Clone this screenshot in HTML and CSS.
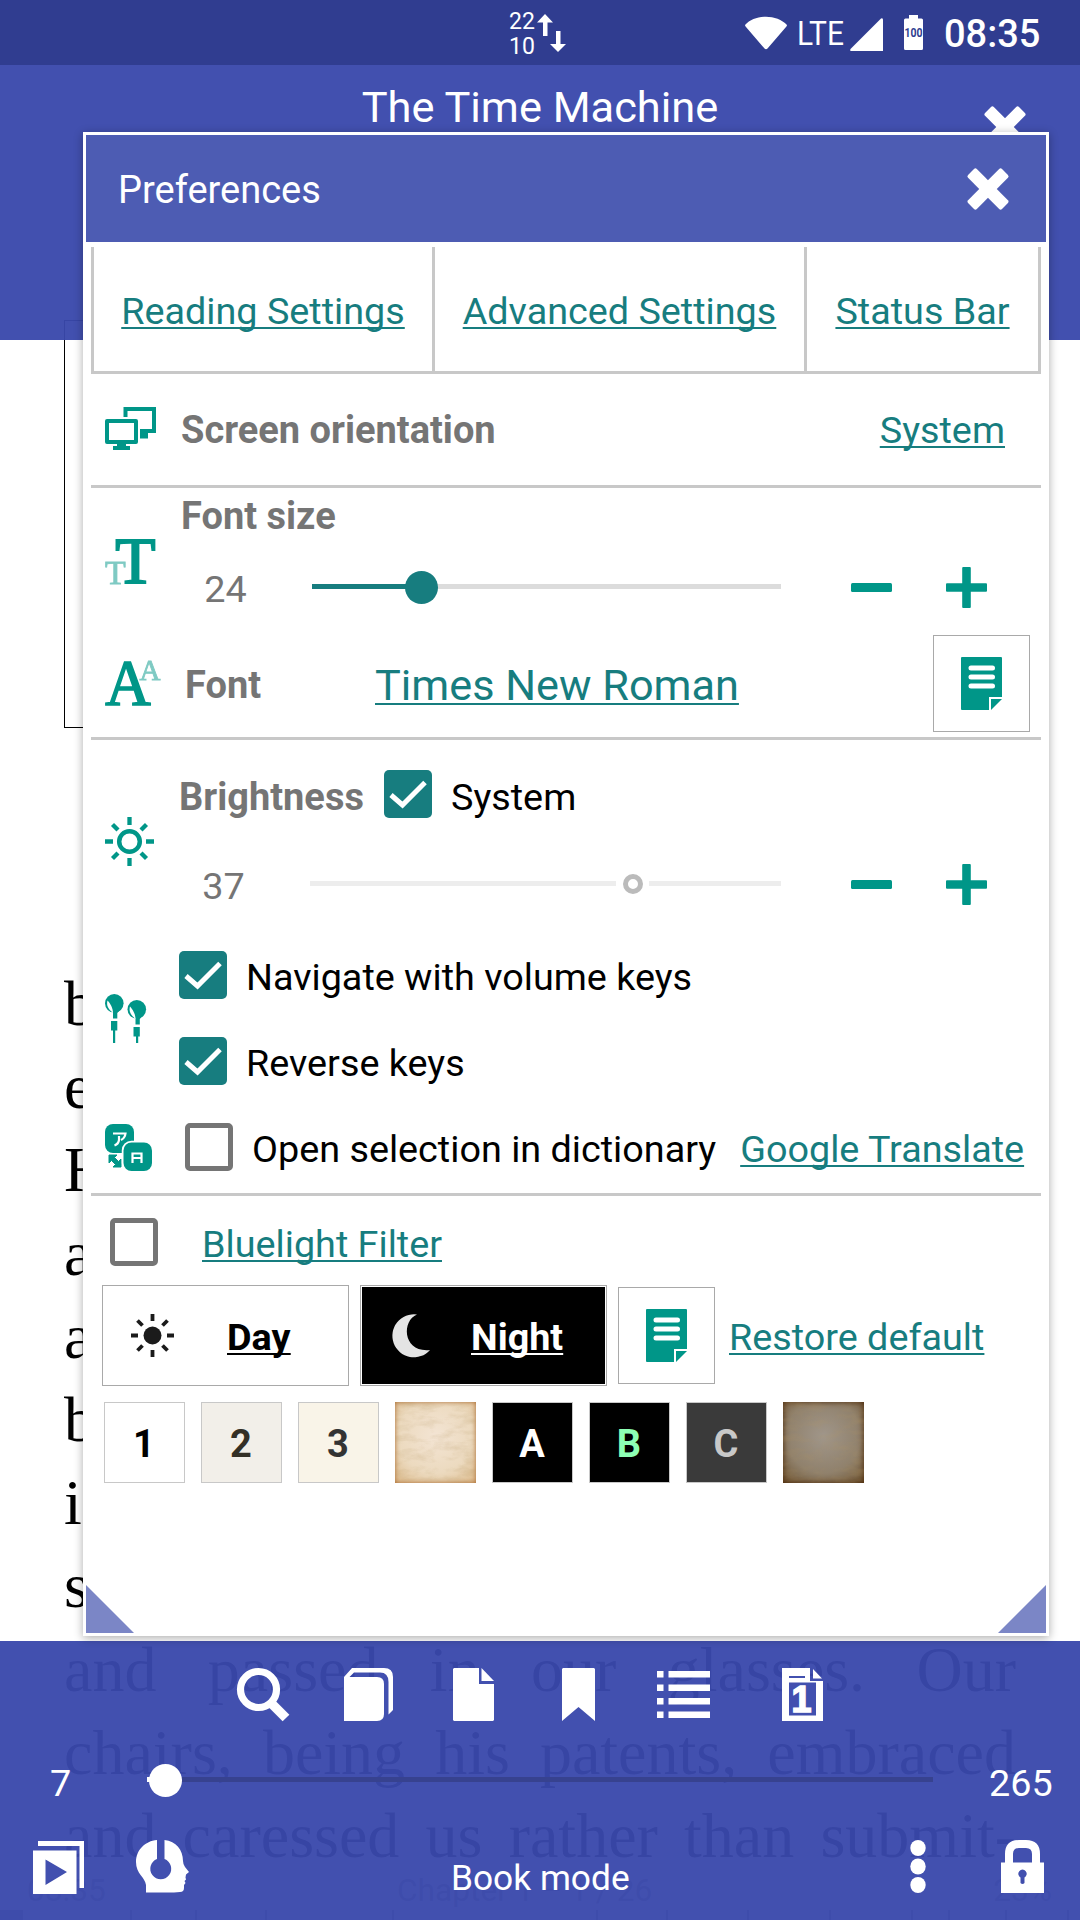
FILE: index.html
```html
<!DOCTYPE html>
<html lang="en">
<head>
<meta charset="utf-8">
<title>The Time Machine</title>
<link rel="stylesheet" href="styles.css">
</head>
<body>
<svg class="defs" width="0" height="0" aria-hidden="true">
  <symbol id="close" viewBox="-22 -22 44 44"><rect x="-24" y="-6.200" width="48" height="12.400" rx="2" transform="rotate(45)" fill="#fff"/><rect x="-24" y="-6.200" width="48" height="12.400" rx="2" transform="rotate(-45)" fill="#fff"/></symbol>
  <symbol id="minus" viewBox="0 0 41 41"><rect y="16" width="41" height="9" rx="1.5"/></symbol>
  <symbol id="plus" viewBox="0 0 41 41"><rect y="16.2" width="41" height="8.6" rx="1"/><rect x="16.2" width="8.6" height="41" rx="1"/></symbol>
  <symbol id="note" viewBox="0 0 41 53"><path d="M1 0H40a1 1 0 0 1 1 1V40H28V53H1a1 1 0 0 1-1-1V1a1 1 0 0 1 1-1Z"/><path d="M30 42H41L30 53Z"/><path d="M10 11H31.500M10 20H31.500M10 29H31.500" stroke="#fff" stroke-width="5" stroke-linecap="round"/></symbol>
  <symbol id="check" viewBox="0 0 48 48"><path d="M7 25 18.500 35 41 12.500" fill="none" stroke="#fff" stroke-width="5"/></symbol>
  <filter id="grain" x="0" y="0" width="100%" height="100%"><feTurbulence type="fractalNoise" baseFrequency=".05 .12" numOctaves="5" seed="8"/><feColorMatrix values="0 0 0 0 .45  0 0 0 0 .3  0 0 0 0 .12  1.400 0 0 0 -.6"/></filter>
</svg>
<div class="screen">
  <main class="page">
    <div class="picture-frame"></div>
    <div class="book-text">
      <p>been</p><p>except</p><p>His</p><p>and</p><p>and</p><p>but</p><p>in</p><p>so</p>
      <p>and passed in our glasses. Our</p>
      <p>chairs, being his patents, embraced</p>
      <p>and caressed us rather than submit-</p>
    </div>
    <footer class="page-footer"><span>08:35</span><span class="chapter">Chapter 1 – 1 / 26</span><span>23%</span></footer>
    <svg class="ticks" viewBox="0 0 1080 10"><path d="M0 0H23V10H0Z"/><path d="M130 0h2v10h-2zM195 0h2v10h-2zM265 0h2v10h-2zM392 0h2v10h-2zM596 0h2v10h-2zM666 0h2v10h-2zM747 0h2v10h-2zM829 0h2v10h-2zM911 0h2v10h-2zM948 0h2v10h-2zM1005 0h2v10h-2zM1067 0h2v10h-2z"/></svg>
  </main>

  <div class="chrome">
    <header class="top-bar">
      <div class="status-bar">
        <div class="net-speed"><span>22</span><span>10</span></div>
        <svg class="net-arrows" viewBox="0 0 28 40"><path d="M8 1 16 9.500H10.500V23H6V9.500H0Z M19 18h4.500v13H29L21 39 13 31h6Z" fill="#fff"/></svg>
        <svg class="wifi" viewBox="0 0 42 34"><path d="M0 9C10-2 32-2 42 9Q42 10 41 11L22.500 32.500Q21 34 19.500 32.500L1 11Q0 10 0 9Z" fill="#fff"/></svg>
        <svg class="lte" viewBox="0 0 44 26"><text x="-3" y="25" font-size="34" textLength="47" lengthAdjust="spacingAndGlyphs" fill="#fff">LTE</text></svg>
        <svg class="signal" viewBox="0 0 33 33"><path d="M31 .5Q33-.5 33 2V33H1.500Q-.5 33 .5 31Z" fill="#fff"/></svg>
        <svg class="battery" viewBox="0 0 19 35"><path d="M5 0H14V3.500H17.500Q19 3.500 19 5V33.500Q19 35 17.500 35H1.500Q0 35 0 33.500V5Q0 3.500 1.500 3.500H5Z" fill="#fff"/><text x="9.500" y="22" text-anchor="middle" font-size="12.500" font-weight="700" textLength="18" lengthAdjust="spacingAndGlyphs" fill="#303d90">100</text></svg>
        <span class="clock">08:35</span>
      </div>
      <h1 class="book-title">The Time Machine</h1>
      <svg class="close-book"><use href="#close"/></svg>
    </header>

    <nav class="bottom-bar">
      <div class="tools">
        <svg class="t-search" viewBox="0 0 53 53"><circle cx="21.500" cy="21.500" r="18" fill="none" stroke="#fff" stroke-width="7.200"/><path d="M33 34 49 50" stroke="#fff" stroke-width="9.500"/></svg>
        <svg class="t-books" viewBox="0 0 49 53" fill="#fff"><path d="M0 9H33Q40 9 40 16V46Q40 53 33 53H0Z"/><path d="M0 9 8 0H40Q49 0 49 9V42L44.500 46.500V14Q44.500 4.500 36 4.500H10L5.500 9Z"/></svg>
        <svg class="t-page" viewBox="0 0 41 53" fill="#fff"><path d="M1 0H26V16H41V52L40 53H1L0 52V1Z"/><path d="M28.500 0 41 13H28.500Z"/></svg>
        <svg class="t-mark" viewBox="0 0 33 53" fill="#fff"><path d="M1 0H32L33 1V53L16.500 39 0 53V1Z"/></svg>
        <svg class="t-list" viewBox="0 0 53 47" fill="#fff"><path d="M0 0h6.500v6.500H0zM11.500 0H53v6.500H11.500zM0 13.500h6.500V20H0zM11.500 13.500H53V20H11.500zM0 27h6.500v6.500H0zM11.500 27H53v6.500H11.500zM0 40.500h6.500V47H0zM11.500 40.500H53V47H11.500z"/></svg>
        <svg class="t-one" viewBox="0 0 41 53" fill="#fff"><path d="M0 0H28V13H41V53H0Z"/><path d="M31 1 40 10.500H31Z"/><path d="M7 9H23" stroke="#4250af" stroke-width="2"/><rect x="7" y="14.500" width="27" height="33" fill="#4250af"/><text class="one" x="19.500" y="44" font-size="36" text-anchor="middle" stroke="#fff" stroke-width="1.500">1</text></svg>
      </div>
      <div class="seek">
        <span class="page-now">7</span>
        <div class="seek-track"><i class="seek-knob"></i></div>
        <span class="page-total">265</span>
      </div>
      <div class="modes">
        <svg class="m-play" viewBox="0 0 51 53" fill="#fff"><path d="M5 0H51V47H46.500V5H5Z"/><path fill-rule="evenodd" d="M0 9.500H43.500V53H0ZM12.500 18.500V44L34 31Z"/></svg>
        <svg class="m-head" viewBox="0 0 53 53"><path fill="#fff" d="M21 0V19A10.500 10.500 0 1 0 28.500 19V0C40 1 47 10 47 21Q47 24 49 27L53 32 50 34.500 49.500 37.500 50 39.500 48.500 41 49.500 43 48 45V48Q48 52 44 52L38 52.500H10V45C9 37 0 34 0 22 0 10 9 1 21 0Z"/></svg>
        <span class="mode-name">Book mode</span>
        <svg class="m-dots" viewBox="0 0 16 53" fill="#fff"><ellipse cx="8" cy="8" rx="7.700" ry="8"/><ellipse cx="8" cy="26.500" rx="7.700" ry="8"/><ellipse cx="8" cy="45" rx="7.700" ry="8"/></svg>
        <svg class="m-lock" viewBox="0 0 43 53"><path d="M8 26V14Q8 4 18 4H25Q35 4 35 14V26" fill="none" stroke="#fff" stroke-width="8"/><path fill="#fff" fill-rule="evenodd" d="M0 22.500H43V53H0ZM19.500 37.500V43Q21.500 45 23.500 43V37.500A4.200 4.200 0 1 0 19.500 37.500Z"/></svg>
      </div>
    </nav>
  </div>

  <section class="dialog">
    <header class="dialog-head">
      <span>Preferences</span>
      <svg class="close-dialog"><use href="#close"/></svg>
    </header>
    <div class="dialog-body">
      <div class="tabs"><a>Reading Settings</a><a>Advanced Settings</a><a>Status Bar</a></div>

      <div class="row orientation">
        <svg class="i-screens" viewBox="0 0 51 43"><path d="M20.500 10V2H49V24H37V29.500H43" fill="none" stroke="#009688" stroke-width="4"/><path d="M36 24h5v2h2v5h-8z" fill="#009688"/><rect x="2" y="14" width="29" height="21" fill="none" stroke="#009688" stroke-width="4" stroke-linejoin="round"/><path d="M12 36H21V39H25V43H8V39H12Z" fill="#009688"/></svg>
        <b class="label">Screen orientation</b>
        <a>System</a>
      </div>

      <div class="section font-section">
        <div class="block size-block">
          <svg class="i-size" viewBox="0 0 51 45" fill="#009688"><text x="30.500" y="44.300" font-size="66" text-anchor="middle" stroke="#009688" stroke-width="1.800">T</text><text x="10.500" y="45" font-size="34" text-anchor="middle" opacity=".5" stroke="#009688" stroke-width=".8">T</text></svg>
          <div>
            <b class="label size-label">Font size</b>
            <div class="stepper size-stepper">
              <span class="value">24</span>
              <div class="slider"><i class="slider-fill"></i><i class="slider-knob"></i></div>
              <svg class="step minus"><use href="#minus"/></svg><svg class="step"><use href="#plus"/></svg>
            </div>
          </div>
        </div>
        <div class="row font-row">
          <svg class="i-font" viewBox="0 0 56 47" fill="#009688"><text x="23" y="46" font-size="65" text-anchor="middle" stroke="#009688" stroke-width="1.600" textLength="45.500" lengthAdjust="spacingAndGlyphs">A</text><text x="45" y="20.500" font-size="29" text-anchor="middle" opacity=".5" stroke="#009688" stroke-width=".9">A</text></svg>
          <b class="label">Font</b>
          <a class="font-name">Times New Roman</a>
          <button class="note-btn"><svg><use href="#note"/></svg></button>
        </div>
      </div>

      <div class="section">
        <div class="block bright-block">
          <svg class="i-sun" viewBox="-24.500 -24.500 49 49" fill="none" stroke="#009688"><circle r="10.300" stroke-width="4.500"/><path d="M0-24.500v8M0 16.500v8M-24.500 0h8M16.500 0h8M-17-17l5.500 5.500M17-17l-5.500 5.500M-17 17l5.500-5.500M17 17l-5.500-5.500" stroke-width="4.300"/></svg>
          <div>
            <div class="bright-head"><b class="label">Brightness</b><svg class="cb on"><use href="#check"/></svg><span class="cb-text">System</span></div>
            <div class="stepper bright-stepper">
              <span class="value">37</span>
              <div class="slider off"><i></i><i class="ring"></i><i></i></div>
              <svg class="step minus"><use href="#minus"/></svg><svg class="step"><use href="#plus"/></svg>
            </div>
          </div>
        </div>
        <div class="block keys-block">
          <svg class="i-buds" viewBox="0 0 41 49" fill="#009688">
            <g id="bud"><circle cx="9.300" cy="9.300" r="9.300"/><path d="M8 16H15L12.300 19V24.500H8Z"/><path d="M6 27H12.300V36.500H6Z"/><path d="M2.500 6.500C1 12 3.500 15 8 19 8 14 5 9 2.500 6.500Z" fill="#fff"/></g>
            <use href="#bud" x="22.500" y="6"/><path d="M8 36h2.200v13H8zM31 42h2.200v7H31z"/>
          </svg>
          <div>
            <div class="check-row"><svg class="cb on"><use href="#check"/></svg><span class="cb-text">Navigate with volume keys</span></div>
            <div class="check-row"><svg class="cb on"><use href="#check"/></svg><span class="cb-text">Reverse keys</span></div>
          </div>
        </div>
        <div class="row dict-row">
          <svg class="i-dict" viewBox="0 0 47 47"><rect width="29" height="29" rx="8" fill="#009688"/><path d="M8 9.500H20.500Q20 14 16 16M14 12V16Q13.500 20 9.500 21.500" fill="none" stroke="#fff" stroke-width="2.200"/><path d="M4 31h8l-2.500 2.500 4 4 2.500-2.500v8H8l2.500-2.500-4-4-2.500 2.500Z" fill="#009688" stroke="#009688"/><rect x="18.500" y="18.500" width="28.500" height="28.500" rx="8" fill="#009688" stroke="#fff" stroke-width="3.500" paint-order="stroke"/><path d="M27.500 39V29.500H36.500V39M27.500 34H36.500" fill="none" stroke="#fff" stroke-width="2.200"/></svg>
          <i class="cb"></i><span class="cb-text">Open selection in dictionary</span><a>Google Translate</a>
        </div>
      </div>

      <div class="section last">
        <div class="row blue-row"><i class="cb"></i><a>Bluelight Filter</a></div>
        <div class="theme-row">
          <button class="theme day"><svg viewBox="-21.500 -21.500 43 43"><circle r="9" fill="#1b1b1b"/><path d="M0-21.500v7M0 14.500v7M-21.500 0h7M14.500 0h7M-15-15l5 5M15-15l-5 5M-15 15l5-5M15 15l-5-5" stroke="#1b1b1b" stroke-width="3.800"/></svg><span>Day</span></button>
          <button class="theme night"><svg viewBox="0 0 37 43"><path d="M24 .5C8 7 10 39 37 36A21.500 21.500 0 1 1 24 .5Z" fill="#e4e4e4"/></svg><span>Night</span></button>
          <button class="note-btn"><svg><use href="#note"/></svg></button>
          <a>Restore default</a>
        </div>
        <div class="swatches">
          <b class="sw s1">1</b><b class="sw s2">2</b><b class="sw s3">3</b>
          <span class="sw paper"><svg viewBox="0 0 81 81"><rect width="81" height="81" filter="url(#grain)"/></svg></span>
          <b class="sw sa">A</b><b class="sw sb">B</b><b class="sw sc">C</b>
          <span class="sw paper dark"><svg viewBox="0 0 81 81"><rect width="81" height="81" filter="url(#grain)"/></svg></span>
        </div>
      </div>
    </div>
    <i class="grip left"></i><i class="grip right"></i>
  </section>
</div>
</body>
</html>
```

FILE: styles.css
```css
* { box-sizing: border-box; }
body { margin: 0; background: #fff; font-family: Roboto, sans-serif; font-size: 37.750px; line-height: 45px; color: #000; }
svg { display: block; flex: none; overflow: visible; }
i { display: block; flex: none; }
.defs { position: absolute; }
.screen { position: relative; width: 1080px; height: 1920px; overflow: hidden; }
a { color: #177d7f; text-decoration: underline; text-decoration-thickness: 2px; text-underline-offset: 3px; text-decoration-skip-ink: none; white-space: nowrap; }
span, b { white-space: nowrap; }
b { font-size: 38px; }
button { font: inherit; color: inherit; padding: 0; margin: 0; background: #fff; border: 1px solid #a9a9a9; flex: none; }

/* page under the controls */
.page { height: 1920px; padding: 320px 64px 0; }
.picture-frame { height: 408px; border: 1px solid #000; }
.book-text { margin-top: 234px; font-family: "Liberation Serif", serif; font-size: 64px; line-height: 83.200px; }
.book-text p { margin: 0; text-align: justify; text-align-last: justify; white-space: nowrap; }
.page-footer { display: flex; margin: -5px -36px 0 -37px; color: #999; font-size: 31.700px; line-height: 38px; height: 38px; }
.page-footer .chapter { margin: 0 auto 0 291px; }
.ticks { width: 1080px; height: 10px; margin: 0 0 0 -64px; fill: #aaa; }

/* bars over the page */
.chrome { position: absolute; inset: 0; display: flex; flex-direction: column; justify-content: space-between; color: #fff; }
.top-bar { height: 340px; background: rgba(58, 72, 171, .957); position: relative; }
.status-bar { height: 65px; background: #303d90; display: flex; align-items: center; padding-left: 509px; }
.net-speed { display: flex; flex-direction: column; font-size: 23px; line-height: 25px; width: 28px; padding-top: 3px; }
.net-arrows { width: 28px; height: 40px; }
.wifi { width: 42px; height: 34px; margin-left: 180px; }
.lte { width: 44px; height: 26px; margin-left: 13px; }
.signal { width: 33px; height: 33px; margin: 3px 0 0 6px; }
.battery { width: 19px; height: 35px; margin-left: 21px; }
.clock { font-size: 38px; font-weight: 500; margin-left: 21px; padding-top: 4px; }
.book-title { margin: 17px 0 0; text-align: center; font-weight: 400; font-size: 43.400px; line-height: 51px; }
.close-book { position: absolute; left: 983px; top: 105px; width: 44px; height: 44px; }

.bottom-bar { height: 279px; background: rgba(58, 72, 171, .957); padding-top: 27px; }
.tools { display: flex; align-items: center; height: 53px; padding-left: 237px; }
.t-search { width: 53px; height: 53px; margin-right: 54px; }
.t-books { width: 49px; height: 53px; margin-right: 60px; }
.t-page { width: 41px; height: 53px; margin-right: 68px; }
.t-mark { width: 33px; height: 53px; margin-right: 62px; }
.t-list { width: 53px; height: 47px; margin-right: 72px; }
.t-one { width: 41px; height: 53px; }
.one { font-family: "Liberation Sans", sans-serif; font-weight: 700; }
.seek { display: flex; align-items: center; height: 118px; padding-left: 50px; }
.page-now { width: 97px; padding-top: 6px; }
.seek-track { width: 786px; height: 5px; background: #37428f; border-left: 3px solid #fff; position: relative; top: -1px; }
.seek-knob { position: absolute; left: -1px; top: -13px; width: 33px; height: 33px; border-radius: 50%; background: #fff; }
.page-total { margin-left: 56px; padding-top: 6px; }
.modes { display: flex; align-items: flex-start; padding-left: 32.500px; }
.m-play { width: 51px; height: 53px; margin: 2px 52.500px 0 0; }
.m-head { width: 53px; height: 53px; margin: 1px 262px 0 0; }
.mode-name { font-size: 35.300px; line-height: 42px; margin-top: 18px; width: 458.500px; }
.m-dots { width: 16px; height: 53px; margin: 1px 75.500px 0 0; }
.m-lock { width: 43px; height: 53px; margin-top: 1px; }

/* preferences window */
.dialog { position: absolute; left: 83px; top: 132px; width: 966px; height: 1504px; background: #fff; border: 3px solid #fff; box-shadow: 0 2px 9px rgba(0, 0, 0, .33); }
.dialog-head { height: 107px; background: #4d5cb3; color: #fff; display: flex; align-items: center; justify-content: space-between; padding: 4px 36px 0 32px; font-size: 38px; }
.close-dialog { width: 44px; height: 44px; margin-bottom: 4px; }
.dialog-body { padding: 5px; }
.tabs { height: 127px; display: grid; grid-template-columns: 341px 372px 231px; border: solid #c8c8c8; border-width: 0 3px 3px; }
.tabs a { text-align: center; padding-top: 42px; border-right: 3px solid #c8c8c8; }
.tabs a:last-child { border-right: 0; }
.row { display: flex; align-items: center; padding-left: 14px; }
.label { color: #757575; }
.orientation { height: 114px; border-bottom: 3px solid #c8c8c8; padding-right: 36px; }
.orientation .label, .orientation a { padding-top: 2px; }
.orientation a { margin-left: auto; }
.i-screens { width: 51px; height: 43px; margin: 0 25px 3px 0; }

.section { border-bottom: 3px solid #c8c8c8; }
.block { display: flex; align-items: center; padding-left: 14px; }
.size-block { height: 144px; }
.i-size { width: 51px; height: 45px; margin: 2px 24px 0 0; font-family: "Liberation Serif", serif; }
.size-label { display: block; height: 56px; line-height: 56px; padding-left: 1px; }
.stepper { display: flex; align-items: center; color: #757575; }
.value { width: 91px; text-align: center; padding-top: 2px; }
.size-stepper { height: 88px; }
.slider { width: 469px; height: 5px; background: #dcdcdc; margin-left: 41px; position: relative; top: -2px; }
.slider-fill { width: 100px; height: 5px; background: #177d7f; }
.slider-knob { position: absolute; left: 93px; top: -13px; width: 33px; height: 33px; border-radius: 50%; background: #177d7f; }
.step { width: 41px; height: 41px; fill: #009688; margin-bottom: 2px; }
.minus { margin: 0 54px 2px 70px; }
.font-row { height: 105px; }
.i-font { width: 56px; height: 47px; margin: -5px 24px 0 0; font-family: "Liberation Serif", serif; }
.font-row .label { width: 190px; padding-top: 2px; }
.font-name { font-size: 43.250px; line-height: 51px; padding-top: 1px; }
.note-btn { width: 97px; height: 97px; display: flex; align-items: center; justify-content: center; fill: #009688; }
.note-btn svg { width: 41px; height: 53px; }
.font-row .note-btn { margin: 0 11px 2px auto; }

.bright-block { height: 180px; }
.i-sun { width: 49px; height: 49px; margin: 22px 24px 0 0; }
.bright-head { display: flex; align-items: center; height: 110px; }
.bright-head .label { width: 206px; padding: 4px 0 0 1px; }
.cb { width: 48px; height: 48px; border-radius: 5px; border: 5px solid #757575; flex: none; }
.cb.on { border: 0; background: #177d7f; }
.bright-head .cb { margin-bottom: 2px; }
.cb-text { margin-left: 19px; padding-top: 5px; }
.bright-head .cb-text { padding-top: 4px; }
.bright-stepper { height: 70px; }
.bright-stepper .slider { width: 471px; background: none; display: flex; align-items: center; }
.slider.off i { height: 5px; width: 306px; background: #ededed; }
.slider.off i:last-child { width: 132px; }
.slider.off .ring { width: 20px; height: 20px; margin: 2px 6.500px 0; background: #fff; border: 5px solid #bbb; border-radius: 50%; }
.bright-stepper .value { width: 91px; padding-top: 3px; }
.bright-stepper .slider { margin-left: 41px; }
.keys-block { height: 172px; margin-top: 12px; }
.i-buds { width: 41px; height: 49px; margin-right: 33px; }
.check-row { height: 86px; display: flex; align-items: center; }
.dict-row { height: 89px; padding-bottom: 3px; }
.i-dict { width: 47px; height: 47px; margin-right: 33px; }
.dict-row a { margin-left: 24px; padding-top: 5px; }

.last { border: 0; }
.blue-row { height: 89px; padding: 3px 0 0 19px; }
.blue-row a { margin-left: 44px; padding-top: 5px; }
.theme-row { display: flex; align-items: center; padding-left: 11px; height: 101px; }
.theme { width: 247px; height: 101px; display: flex; align-items: center; font-weight: 700; text-decoration: underline; text-decoration-thickness: 2px; text-underline-offset: 3px; text-decoration-skip-ink: none; margin-right: 11px; }
.theme span { text-decoration: inherit; padding-top: 4px; }
.day svg { width: 43px; height: 43px; margin: 0 53px 0 28px; }
.night { background: #000; color: #fff; box-shadow: inset 0 0 0 1px #fff; }
.night svg { width: 37px; height: 43px; margin: 0 41px 0 32px; }
.theme-row a { margin-left: 14px; padding-top: 4px; }
.swatches { display: flex; gap: 16px; margin-top: 16px; padding-left: 13px; }
.sw { width: 81px; height: 81px; border: 1px solid #c8c8c8; text-align: center; line-height: 81px; padding: 1px 1px 0 0; }
.s2 { background: #f2efe9; color: #343026; }
.s3 { background: #f9f4e8; color: #333; }
.sa { background: #000; color: #fff; }
.sb { background: #000; color: #8dffb4; }
.sc { background: #3a3a3a; color: #c8c8c8; }
.paper { border: 0; padding: 0; background: radial-gradient(circle at 50% 42%, #f3e4d3, #ecdabf 60%, #ddbb8c); box-shadow: inset 0 0 5px #a9682e; }
.paper svg { width: 81px; height: 81px; opacity: .4; }
.dark { background: radial-gradient(circle at 50% 42%, #a0968a, #90816c 60%, #6d5330); box-shadow: inset 0 0 6px #4a2608; }
.grip { position: absolute; bottom: 0; width: 48px; height: 48px; background: #7b86c6; }
.left { left: 0; clip-path: polygon(0 0, 100% 100%, 0 100%); }
.right { right: 0; clip-path: polygon(100% 0, 100% 100%, 0 100%); }
```
